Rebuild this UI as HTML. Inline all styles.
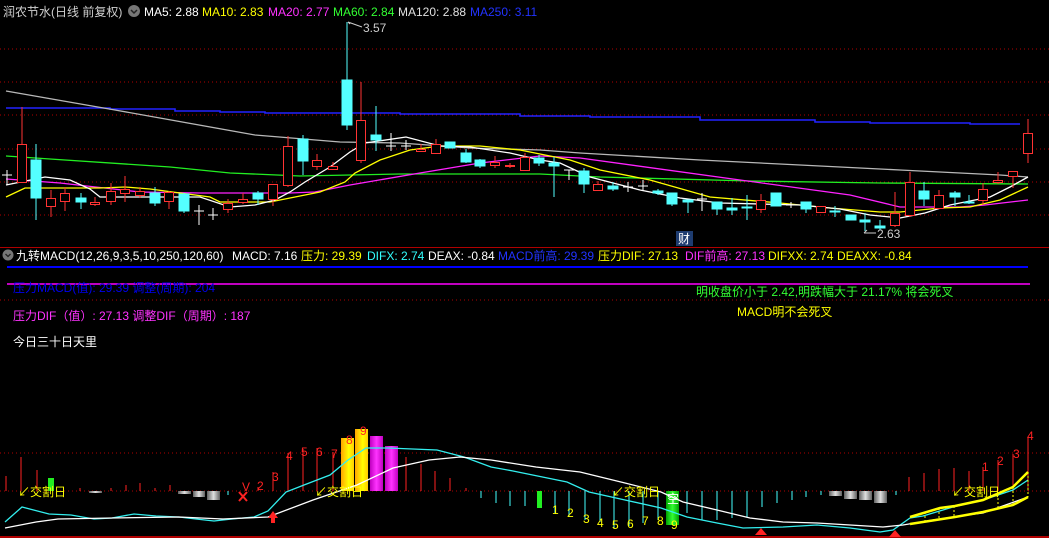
<!DOCTYPE html>
<html><head><meta charset="utf-8"><style>
html,body{margin:0;padding:0;background:#000;width:1049px;height:538px;overflow:hidden}
svg{display:block}
text{font-family:"Liberation Sans","Noto Sans CJK SC",sans-serif;font-size:12px}
</style></head><body>
<svg width="1049" height="538" viewBox="0 0 1049 538" xmlns="http://www.w3.org/2000/svg">
<defs>
<linearGradient id="gy" x1="0" x2="1"><stop offset="0" stop-color="#ffa500"/><stop offset="0.6" stop-color="#ffff00"/><stop offset="1" stop-color="#ffcc00"/></linearGradient>
<linearGradient id="gm" x1="0" x2="1"><stop offset="0" stop-color="#c000c0"/><stop offset="0.5" stop-color="#ff33ff"/><stop offset="1" stop-color="#c000c0"/></linearGradient>
<linearGradient id="gg" x1="0" x2="1"><stop offset="0" stop-color="#606060"/><stop offset="0.5" stop-color="#e0e0e0"/><stop offset="1" stop-color="#606060"/></linearGradient>
<linearGradient id="gn" x1="0" x2="1"><stop offset="0" stop-color="#00a000"/><stop offset="0.5" stop-color="#33ff33"/><stop offset="1" stop-color="#00a000"/></linearGradient>
</defs>
<rect width="1049" height="538" fill="#000"/>
<line x1="0" y1="247.5" x2="1049" y2="247.5" stroke="#b00000"/>
<line x1="0" y1="537" x2="1049" y2="537" stroke="#b00000" stroke-width="2"/>
<g stroke="#b00000" stroke-dasharray="1,3">
<line x1="0" y1="49" x2="1049" y2="49"/><line x1="0" y1="82" x2="1049" y2="82"/><line x1="0" y1="115" x2="1049" y2="115"/><line x1="0" y1="149" x2="1049" y2="149"/><line x1="0" y1="182" x2="1049" y2="182"/><line x1="0" y1="215" x2="1049" y2="215"/>
<line x1="0" y1="300" x2="1049" y2="300"/><line x1="0" y1="453" x2="1049" y2="453"/><line x1="0" y1="491" x2="1049" y2="491"/>
</g>
<text x="3" y="16" fill="#d0d0d0" font-size="13">润农节水(日线 前复权)</text>
<circle cx="134" cy="11" r="6" fill="#777"/><path d="M131 10 L134 13 L137 10" stroke="#222" fill="none" stroke-width="1.5"/>
<text x="144" y="16" fill="#fff">MA5: 2.88</text>
<text x="202" y="16" fill="#ffff00">MA10: 2.83</text>
<text x="268" y="16" fill="#ff33ff">MA20: 2.77</text>
<text x="333" y="16" fill="#33ff33">MA60: 2.84</text>
<text x="398" y="16" fill="#e0e0e0">MA120: 2.88</text>
<text x="470" y="16" fill="#2233ff">MA250: 3.11</text>
<g fill="none" stroke-width="1.3">
<polyline stroke="#2222ff" stroke-width="1.6" points="6,108 110,108 110,109 175,109 175,111 220,111 220,112 265,112 265,113 400,113 400,114 520,114 520,116 590,116 590,117 700,117 700,120 815,120 815,122 870,122 870,123 970,123 970,124 1020,124"/>
<polyline stroke="#b8b8b8" points="6,91 115,110 255,135 340,142 400,143 470,148 540,150 580,153 700,160 800,165 900,170 1000,175 1028,177"/>
<polyline stroke="#22ee22" points="6,156 50,159 170,167 230,173 300,176 400,174 540,174 600,177 750,181 880,183 1028,184"/>
<polyline stroke="#ff22ff" points="6,179 60,183 140,192 200,193 290,193 315,192 350,185 420,173 480,163 540,156 580,158 740,180 850,195 900,207 960,207 985,205 1028,200"/>
<polyline stroke="#ffff00" points="6,197 25,188 100,188 125,187 150,189 210,197 220,202 270,202 295,197 320,192 345,182 355,173 380,160 410,150 440,146 480,146 520,150 570,160 600,170 650,180 710,197 780,203 830,208 880,212 900,212 940,208 970,207 1000,200 1028,187"/>
<polyline stroke="#ffffff" points="6,185 45,177 70,180 90,189 100,197 200,197 230,207 255,205 275,200 290,192 305,182 330,167 350,152 365,143 406,137 440,146 470,147 510,153 540,160 560,163 590,177 640,190 680,198 720,203 800,205 840,209 870,215 900,218 925,213 950,205 990,197 1010,187 1028,177"/>
</g>
<g stroke-width="1">
<g stroke="#fff">
<path d="M2 175H12M7 170V185"/><path d="M194 211H204M199 205V225"/><path d="M208 215H218M213 208V220"/>
<path d="M386 146H396M391 133V151"/><path d="M401 146H411M406 140V150"/>
<path d="M564 170H574M569 170V180"/><path d="M623 187H633M628 182V192"/><path d="M638 186H648M643 180V191"/>
<path d="M697 199H707M702 193V211"/><path d="M786 205H796M791 202V208"/>
</g>
<g stroke="#54ffff" fill="#54ffff">
<path d="M36 144V220M81 193V209M155 187V206M184 193V213M258 191V205M303 135V175M347 22V130M376 106V151M450 142V148M466 149V163M480 159V168M539 155V166M554 157V197M584 168V193M613 182V191M658 189V195M672 193V206M688 200V213M717 202V215M732 198V215M747 195V220M776 193V206M806 202V213M835 206V217M851 215V220M865 213V231M880 220V230M924 182V206M955 191V206M969 195V204"/>
<rect x="31" y="160" width="10" height="38"/><rect x="76" y="198" width="10" height="4"/><rect x="150" y="193" width="10" height="10"/><rect x="179" y="194" width="10" height="17"/><rect x="253" y="193" width="10" height="6"/><rect x="298" y="139" width="10" height="22"/><rect x="342" y="80" width="10" height="45"/><rect x="371" y="135" width="10" height="5"/><rect x="445" y="142" width="10" height="6"/><rect x="461" y="153" width="10" height="9"/><rect x="475" y="160" width="10" height="6"/><rect x="534" y="158" width="10" height="5"/><rect x="549" y="163" width="10" height="3"/><rect x="579" y="171" width="10" height="13"/><rect x="608" y="186" width="10" height="3"/><rect x="653" y="191" width="10" height="2"/><rect x="667" y="193" width="10" height="11"/><rect x="683" y="200" width="10" height="2"/><rect x="712" y="202" width="10" height="7"/><rect x="727" y="208" width="10" height="2"/><rect x="742" y="207" width="10" height="1"/><rect x="771" y="193" width="10" height="13"/><rect x="801" y="202" width="10" height="7"/><rect x="830" y="211" width="10" height="1"/><rect x="846" y="215" width="10" height="5"/><rect x="860" y="220" width="10" height="2"/><rect x="875" y="226" width="10" height="2"/><rect x="919" y="191" width="10" height="8"/><rect x="950" y="193" width="10" height="4"/><rect x="964" y="202" width="10" height="1"/>
</g>
<g stroke="#ff3333" fill="#000">
<path d="M22 107V183M51 190V217M65 187V211M95 197V206M111 183V205M125 176V202M140 187V198M169 191V209M228 199V213M243 193V204M273 184V206M288 136V187M317 154V170M333 162V170M361 82V163M421 144V152M436 139V154M495 156V168M510 163V168M525 153V171M598 181V190M761 194V213M821 206V212M895 192V227M910 172V217M939 190V209M983 183V205M998 172V184M1013 171V188M1028 119V163"/>
<rect x="17.5" y="144.5" width="9" height="38"/><rect x="46.5" y="198.5" width="9" height="8"/><rect x="60.5" y="193.5" width="9" height="8"/><rect x="90.5" y="202.5" width="9" height="2"/><rect x="106.5" y="191.5" width="9" height="10"/><rect x="120.5" y="189.5" width="9" height="4"/><rect x="135.5" y="191.5" width="9" height="4"/><rect x="164.5" y="192.5" width="9" height="9"/><rect x="223.5" y="203.5" width="9" height="6"/><rect x="238.5" y="199.5" width="9" height="3"/><rect x="268.5" y="184.5" width="9" height="15"/><rect x="283.5" y="146.5" width="9" height="39"/><rect x="312.5" y="160.5" width="9" height="6"/><rect x="328.5" y="166.5" width="9" height="3"/><rect x="356.5" y="120.5" width="9" height="40"/><rect x="416.5" y="149.5" width="9" height="2"/><rect x="431.5" y="144.5" width="9" height="9"/><rect x="490.5" y="162.5" width="9" height="3"/><rect x="505.5" y="165.5" width="9" height="1"/><rect x="520.5" y="157.5" width="9" height="13"/><rect x="593.5" y="184.5" width="9" height="6"/><rect x="756.5" y="200.5" width="9" height="9"/><rect x="816.5" y="206.5" width="9" height="6"/><rect x="890.5" y="213.5" width="9" height="12"/><rect x="905.5" y="182.5" width="9" height="33"/><rect x="934.5" y="195.5" width="9" height="13"/><rect x="978.5" y="189.5" width="9" height="11"/><rect x="993.5" y="180.5" width="9" height="2"/><rect x="1008.5" y="171.5" width="9" height="5"/><rect x="1023.5" y="133.5" width="9" height="20"/>
</g>
</g>
<path d="M348 22 L350 24 M348 22 L362 27" stroke="#ccc" fill="none"/><text x="363" y="32" fill="#ccc">3.57</text>
<path d="M864 233 L876 233 M864 233 L867 230" stroke="#ccc" fill="none"/><text x="877" y="238" fill="#ccc">2.63</text>
<rect x="676" y="231" width="17" height="15" fill="#1e3c70"/><text x="678" y="243" fill="#fff">财</text>
<circle cx="8" cy="255" r="5.5" fill="#777"/><path d="M5.5 254 L8 256.5 L10.5 254" stroke="#222" fill="none" stroke-width="1.3"/>
<text x="16" y="260" fill="#fff">九转MACD(12,26,9,3,5,10,250,120,60)</text>
<text x="232" y="260" fill="#fff">MACD: 7.16</text>
<text x="301" y="260" fill="#ffff00">压力: 29.39</text>
<text x="367" y="260" fill="#33ffff">DIFX: 2.74</text>
<text x="428" y="260" fill="#fff">DEAX: -0.84</text>
<text x="498" y="260" fill="#2233ff">MACD前高: 29.39</text>
<text x="598" y="260" fill="#ffff00">压力DIF: 27.13</text>
<text x="685" y="260" fill="#ff33ff">DIF前高: 27.13</text>
<text x="768" y="260" fill="#ffff00">DIFXX: 2.74</text>
<text x="837" y="260" fill="#ffff00">DEAXX: -0.84</text>
<line x1="7" y1="267" x2="1028" y2="267" stroke="#0000ff" stroke-width="2"/>
<line x1="7" y1="284" x2="1030" y2="284" stroke="#ff00ff" stroke-width="1.5"/>
<text x="13" y="292" fill="#0000ee">压力MACD(值): 29.39   调整(周期): 204</text>
<text x="696" y="296" fill="#33ff33">明收盘价小于 2.42,明跌幅大于 21.17%  将会死叉</text>
<text x="737" y="316" fill="#ffff00">MACD明不会死叉</text>
<text x="13" y="320" fill="#ff33ff">压力DIF（值）: 27.13   调整DIF（周期）: 187</text>
<text x="13" y="346" fill="#fff">今日三十日天里</text>
<g stroke="#ff2222">
<path d="M6 491V476M21 491V457M37 491V470M80 491V488M111 491V488M126 491V485M140 491V483M155 491V488M170 491V485M258 491V487M273 491V472M288 491V453M303 491V449M317 491V448M333 491V452M406 491V457M421 491V464M435 491V471M450 491V478M466 491V488M909 491V477M924 491V473M939 491V469M954 491V468M969 491V471M983 491V467M998 491V460M1013 491V454M1028 491V437"/>
</g>
<rect x="48" y="478" width="6" height="13" fill="#22ee22"/>
<rect x="89" y="491" width="13" height="2" fill="url(#gg)"/><rect x="178" y="491" width="13" height="3" fill="url(#gg)"/><rect x="193" y="491" width="12" height="6" fill="url(#gg)"/><rect x="207" y="491" width="13" height="9" fill="url(#gg)"/>
<rect x="829" y="491" width="13" height="5" fill="url(#gg)"/><rect x="844" y="491" width="13" height="8" fill="url(#gg)"/><rect x="859" y="491" width="13" height="9" fill="url(#gg)"/><rect x="874" y="491" width="13" height="12" fill="url(#gg)"/>
<g stroke="#44ffff">
<path d="M228 491V495M481 491V498M496 491V503M510 491V506M525 491V506M555 491V513M569 491V517M585 491V520M600 491V522M614 491V528M629 491V526M643 491V523M658 491V520M687 491V513M702 491V520M717 491V520M732 491V518M747 491V517M762 491V507M777 491V503M792 491V500M806 491V497M821 491V495M896 491V495"/>
</g>
<rect x="537" y="491" width="5" height="17" fill="#22ee22"/>
<rect x="666" y="491" width="13" height="34" fill="url(#gn)"/>
<text x="667" y="503" fill="#fff" font-size="12">空</text>
<rect x="341" y="438" width="13" height="53" fill="url(#gy)"/>
<rect x="355" y="429" width="13" height="62" fill="url(#gy)"/>
<rect x="370" y="436" width="13" height="55" fill="url(#gm)"/>
<rect x="385" y="446" width="13" height="45" fill="url(#gm)"/>
<polyline fill="none" stroke="#33eeee" stroke-width="1.3" points="5,522 22,507 49,514 71,515 94,519 112,518 134,514 156,516 179,517 196,519 214,521 232,519 254,517 268,511 286,492 304,485 330,475 348,460 366,448 388,448 437,450 464,457 491,467 513,471 567,482 589,492 625,500 661,508 687,517 717,523 743,528 783,527 817,525 850,528 880,532 893,530 910,518 923,516 953,507 983,500 1013,490 1028,480"/>
<polyline fill="none" stroke="#fff" stroke-width="1.3" points="5,528 36,522 58,519 112,518 179,517 223,519 268,517 313,500 357,485 393,468 429,460 460,457 491,460 536,467 580,472 625,483 661,492 683,502 717,510 750,518 783,522 817,523 850,525 883,527 903,525 933,520 967,515 983,513 1028,497"/>
<polyline fill="none" stroke="#ffff00" stroke-width="2.5" points="910,517 940,508 955,506 983,500 1013,487 1028,472"/>
<polyline fill="none" stroke="#ffff00" stroke-width="2.5" points="910,524 955,517 983,512 1013,505 1028,497"/>
<g stroke="#ffff00" stroke-dasharray="2,2"><path d="M925 512V521M939 508V519M954 506V517M998 494V508M1013 487V505M1028 472V497"/></g>
<g fill="#ff2222"><path d="M268 518L273 511L278 518H275V523H271V518Z"/><path d="M755 535L761 528L767 535Z"/><path d="M889 537L895 530L901 537Z"/></g>
<path d="M239 492L247 501M247 492L239 501" stroke="#ff2222" stroke-width="2"/>
<g fill="#ff2222" font-size="12">
<text x="242" y="491">V</text><text x="257" y="490">2</text><text x="272" y="481">3</text><text x="286" y="460">4</text><text x="301" y="456">5</text><text x="316" y="456">6</text><text x="331" y="458">7</text><text x="346" y="444">8</text><text x="360" y="435">9</text>
<text x="982" y="471">1</text><text x="997" y="465">2</text><text x="1013" y="458">3</text><text x="1027" y="440">4</text>
</g>
<g fill="#ffff00" font-size="12">
<text x="552" y="514">1</text><text x="567" y="517">2</text><text x="583" y="523">3</text><text x="597" y="527">4</text><text x="612" y="529">5</text><text x="627" y="528">6</text><text x="642" y="525">7</text><text x="657" y="525">8</text><text x="671" y="529">9</text>
</g>
<g fill="#ffff00" font-size="13">
<text x="18" y="496">↙交割日</text><text x="315" y="496">↙交割日</text><text x="612" y="496">↙交割日</text><text x="952" y="496">↙交割日</text>
</g>
</svg>
</body></html>
